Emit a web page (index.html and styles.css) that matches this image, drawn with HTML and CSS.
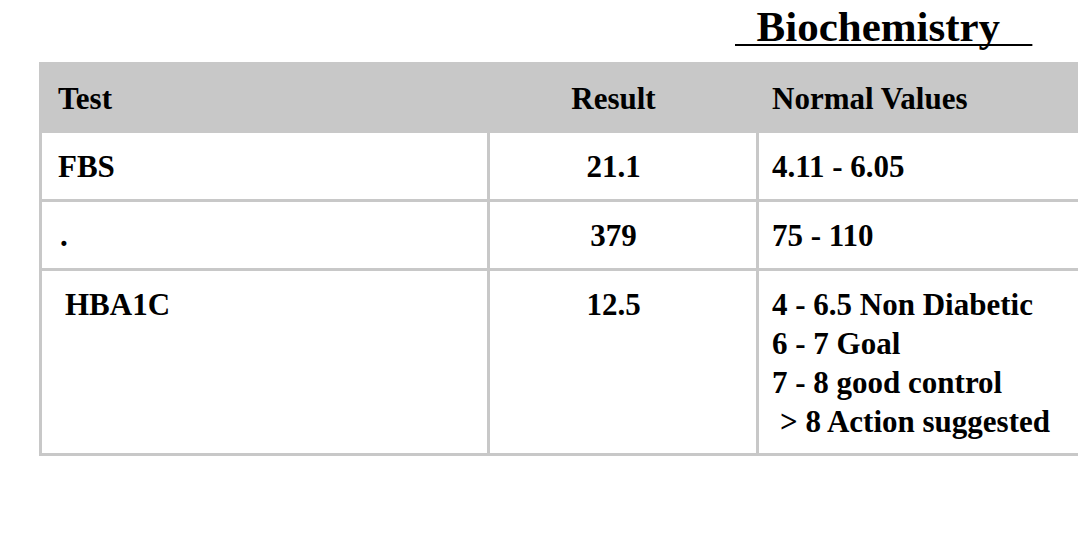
FILE: index.html
```html
<!DOCTYPE html>
<html lang="en">
<head>
    <meta charset="UTF-8">
    <title>Biochemistry Report</title>
    <link rel="stylesheet" href="styles.css">
</head>
<body>
<div class="report">
    <!-- Section title -->
    <div class="section-title">
        <span class="underlined">&nbsp;&nbsp;Biochemistry&nbsp;&nbsp;&nbsp;</span>
    </div>

    <!-- Results table -->
    <table class="results">
        <colgroup>
            <col class="col-test">
            <col class="col-result">
            <col class="col-normal">
        </colgroup>
        <thead>
            <tr>
                <th class="test">Test</th>
                <th class="result">Result</th>
                <th class="normal">Normal Values</th>
            </tr>
        </thead>
        <tbody>
            <tr class="row">
                <td class="test">FBS</td>
                <td class="result">21.1</td>
                <td class="normal">4.11 - 6.05</td>
            </tr>
            <tr class="row">
                <td class="test dot">.</td>
                <td class="result">379</td>
                <td class="normal">75 - 110</td>
            </tr>
            <tr class="row tall">
                <td class="test indent">HBA1C</td>
                <td class="result">12.5</td>
                <td class="normal">
                    <div>4 - 6.5 Non Diabetic</div>
                    <div>6 - 7 Goal</div>
                    <div>7 - 8 good control</div>
                    <div class="indent">&gt; 8 Action suggested</div>
                </td>
            </tr>
        </tbody>
    </table>
</div>
</body>
</html>
```

FILE: styles.css
```css
/* Plain printed-report look */
body {
  margin: 0;
  background: #fff;
  color: #000;
  font-family: "Liberation Serif", "Times New Roman", serif;
  font-weight: bold;
  overflow: hidden;
}
.report {
  width: 1120px;
}
.section-title {
  display: flex;
  padding-left: 735px;
  height: 62px;
  font-size: 43px;
  line-height: 54px;
}
.underlined {
  white-space: pre;
  text-decoration: underline;
  text-decoration-thickness: 2px;
  text-underline-offset: 3px;
  text-decoration-skip-ink: none;
  padding-right: 0;
}
.results {
  margin-left: 39px;
  border-collapse: collapse;
  table-layout: fixed;
  width: 1080px;
  border: 3px solid #c8c8c8;
  font-size: 31px;
  line-height: 39px;
}
.col-test {
  width: 448px;
}
.col-result {
  width: 269px;
}
.results th,
.results td {
  border: 3px solid #c8c8c8;
  padding: 14px 14px 0 14px;
  vertical-align: top;
  text-align: left;
  font-weight: bold;
}
.results thead tr {
  height: 68px;
  background: #c8c8c8;
}
.results .row {
  height: 69px;
}
.results .row.tall {
  height: 185px;
}
.results .test {
  padding-left: 16px;
}
.results .normal {
  padding-left: 13px;
}
.results .result {
  text-align: center;
  padding-left: 5px;
  padding-right: 24px;
}
.results .dot {
  padding-left: 18px;
}
.indent {
  padding-left: 8px;
}
.results td.indent {
  padding-left: 23px;
}
```
